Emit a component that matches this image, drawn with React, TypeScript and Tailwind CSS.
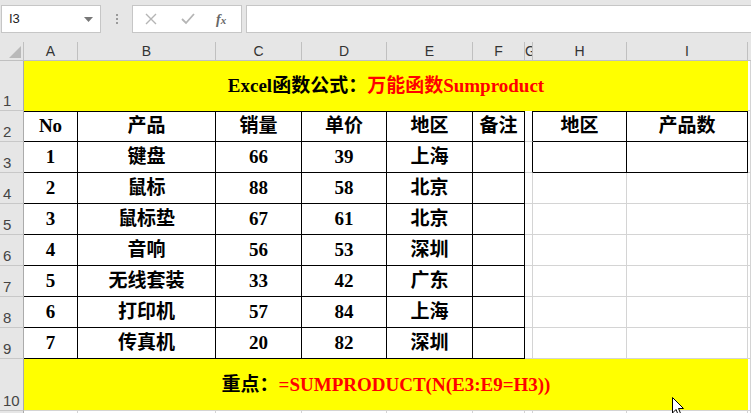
import React from "react";

const serif = { fontFamily: '"Liberation Serif", "Noto Sans CJK SC", serif' };
const sans = { fontFamily: '"Liberation Sans", Arial, sans-serif' };

const data: [number, string, number, number, string][] = [
  [1, "键盘", 66, 39, "上海"],
  [2, "鼠标", 88, 58, "北京"],
  [3, "鼠标垫", 67, 61, "北京"],
  [4, "音响", 56, 53, "深圳"],
  [5, "无线套装", 33, 42, "广东"],
  [6, "打印机", 57, 84, "上海"],
  [7, "传真机", 20, 82, "深圳"],
];

function RowHead({ n }: { n?: number }) {
  return (
    <div
      className="bg-[#e6e6e6] border-r border-b border-r-[#ababab] border-b-[#c8c8c8] flex items-end pl-[3px] pb-[1px] text-[15px] leading-[16px] text-[#444]"
      style={sans}
    >
      {n}
    </div>
  );
}

const tb =
  "bg-white border-r border-b border-black flex items-center justify-center text-[19px] font-bold text-black";
const tbTop =
  "bg-white border-r border-b border-black flex items-center justify-center text-[19px] font-bold text-black shadow-[inset_0_1px_0_#000]";
const grid = "bg-white border-r border-b border-[#d4d4d4]";

export default function App() {
  const cols = ["A", "B", "C", "D", "E", "F", "G", "H", "I"];
  return (
    <div className="w-[751px] h-[413px] overflow-hidden bg-[#e6e6e6] relative select-none">
      {/* formula bar */}
      <div className="h-[42px] flex items-start pt-[5px] bg-[#e6e6e6]">
        <div className="ml-[1px] w-[100px] h-[28px] bg-white border border-[#c6c6c6] flex items-center justify-between pl-[7px] pr-[7px]">
          <span className="text-[13px] text-[#222]" style={sans}>
            I3
          </span>
          <svg width="9" height="5" viewBox="0 0 9 5">
            <path d="M0 0 L9 0 L4.5 5 Z" fill="#777" />
          </svg>
        </div>
        <div className="w-[31px] h-[28px] flex flex-col items-center justify-center gap-[2px]">
          <div className="w-[2px] h-[2px] bg-[#9a9a9a]" />
          <div className="w-[2px] h-[2px] bg-[#9a9a9a]" />
          <div className="w-[2px] h-[2px] bg-[#9a9a9a]" />
        </div>
        <div className="w-[110px] h-[28px] bg-white border border-[#c6c6c6] flex items-center">
          <svg className="ml-[12px]" width="12" height="12" viewBox="0 0 12 12">
            <path d="M1 1 L11 11 M11 1 L1 11" stroke="#b5b5b5" strokeWidth="1.4" />
          </svg>
          <svg className="ml-[24px]" width="14" height="12" viewBox="0 0 14 12">
            <path d="M1 6 L5 10 L13 1" stroke="#b5b5b5" strokeWidth="1.8" fill="none" />
          </svg>
          <span
            className="ml-[21px] text-[14px] italic font-bold text-[#666]"
            style={serif}
          >
            f<span className="text-[11px]">x</span>
          </span>
        </div>
        <div className="ml-[4px] flex-1 h-[28px] bg-white border border-[#c6c6c6] border-r-0" />
      </div>

      {/* sheet grid */}
      <div className="grid grid-cols-[24px_54px_138px_86px_85px_86px_52px_8px_94px_121px_3px] grid-rows-[19px_50px_31px_31px_31px_31px_31px_31px_31px_31px_52px_20px] bg-white">
        {/* header row */}
        <div className="bg-[#e6e6e6] border-r border-b border-[#c0c0c0] relative">
          <svg className="absolute left-[9px] top-[4px]" width="12" height="12" viewBox="0 0 12 12">
            <path d="M12 0 L12 12 L0 12 Z" fill="#b9b9b9" />
          </svg>
        </div>
        {cols.map((c) => (
          <div
            key={c}
            className={
              c === "G"
                ? "bg-[#e6e6e6] border-r border-b border-[#c0c0c0] flex items-center justify-start text-[14px] text-[#333] overflow-hidden"
                : "bg-[#e6e6e6] border-r border-b border-[#c0c0c0] flex items-center justify-center text-[14px] text-[#333] overflow-hidden"
            }
            style={sans}
          >
            {c}
          </div>
        ))}
        <div className="bg-[#e6e6e6] border-b border-[#c0c0c0]" />

        {/* row 1 */}
        <RowHead n={1} />
        <div
          className="col-span-9 bg-[#ffff00] flex items-center justify-center text-[19px] font-bold whitespace-nowrap"
          style={serif}
        >
          <span className="text-black">Excel函数公式：</span>
          <span className="text-[#ff0000]">万能函数Sumproduct</span>
        </div>
        <div className={grid} />

        {/* row 2 */}
        <RowHead n={2} />
        {["No", "产品", "销量", "单价", "地区", "备注"].map((h) => (
          <div key={h} className={tbTop} style={serif}>
            {h}
          </div>
        ))}
        <div className="bg-white border-r border-b border-r-black border-b-[#d4d4d4]" />
        <div className={tbTop} style={serif}>
          地区
        </div>
        <div className={tbTop} style={serif}>
          产品数
        </div>
        <div className={grid} />

        {/* rows 3-9 */}
        {data.map((r, i) => (
          <React.Fragment key={i}>
            <RowHead n={i + 3} />
            <div className={tb} style={serif}>
              {r[0]}
            </div>
            <div className={tb} style={serif}>
              {r[1]}
            </div>
            <div className={tb} style={serif}>
              {r[2]}
            </div>
            <div className={tb} style={serif}>
              {r[3]}
            </div>
            <div className={tb} style={serif}>
              {r[4]}
            </div>
            <div className={tb} />
            {i === 0 ? (
              <>
                <div className="bg-white border-r border-b border-r-black border-b-[#d4d4d4]" />
                <div className={tb} />
                <div className={tb} />
              </>
            ) : (
              <>
                <div className={grid} />
                <div className={grid} />
                <div className={grid} />
              </>
            )}
            <div className={grid} />
          </React.Fragment>
        ))}

        {/* row 10 */}
        <RowHead n={10} />
        <div
          className="col-span-9 bg-[#ffff00] border-b border-[#d4d4d4] flex items-center justify-center pt-[1px] text-[19px] font-bold whitespace-nowrap"
          style={serif}
        >
          <span className="text-black">重点：</span>
          <span className="text-[#ff0000]">=SUMPRODUCT(N(E3:E9=H3))</span>
        </div>
        <div className={grid} />

        {/* row 11 (mostly off-screen) */}
        <RowHead />
        {cols.map((c) => (
          <div key={c} className={grid} />
        ))}
        <div className={grid} />
      </div>

      {/* mouse cursor */}
      <svg
        className="absolute left-[672px] top-[397px]"
        width="14"
        height="20"
        viewBox="0 0 14 20"
      >
        <path
          d="M0.5 0.5 L0.5 16 L4 12.5 L6.5 18.5 L9 17.5 L6.5 11.5 L11.5 11.5 Z"
          fill="#fff"
          stroke="#000"
          strokeWidth="1"
        />
      </svg>
    </div>
  );
}
